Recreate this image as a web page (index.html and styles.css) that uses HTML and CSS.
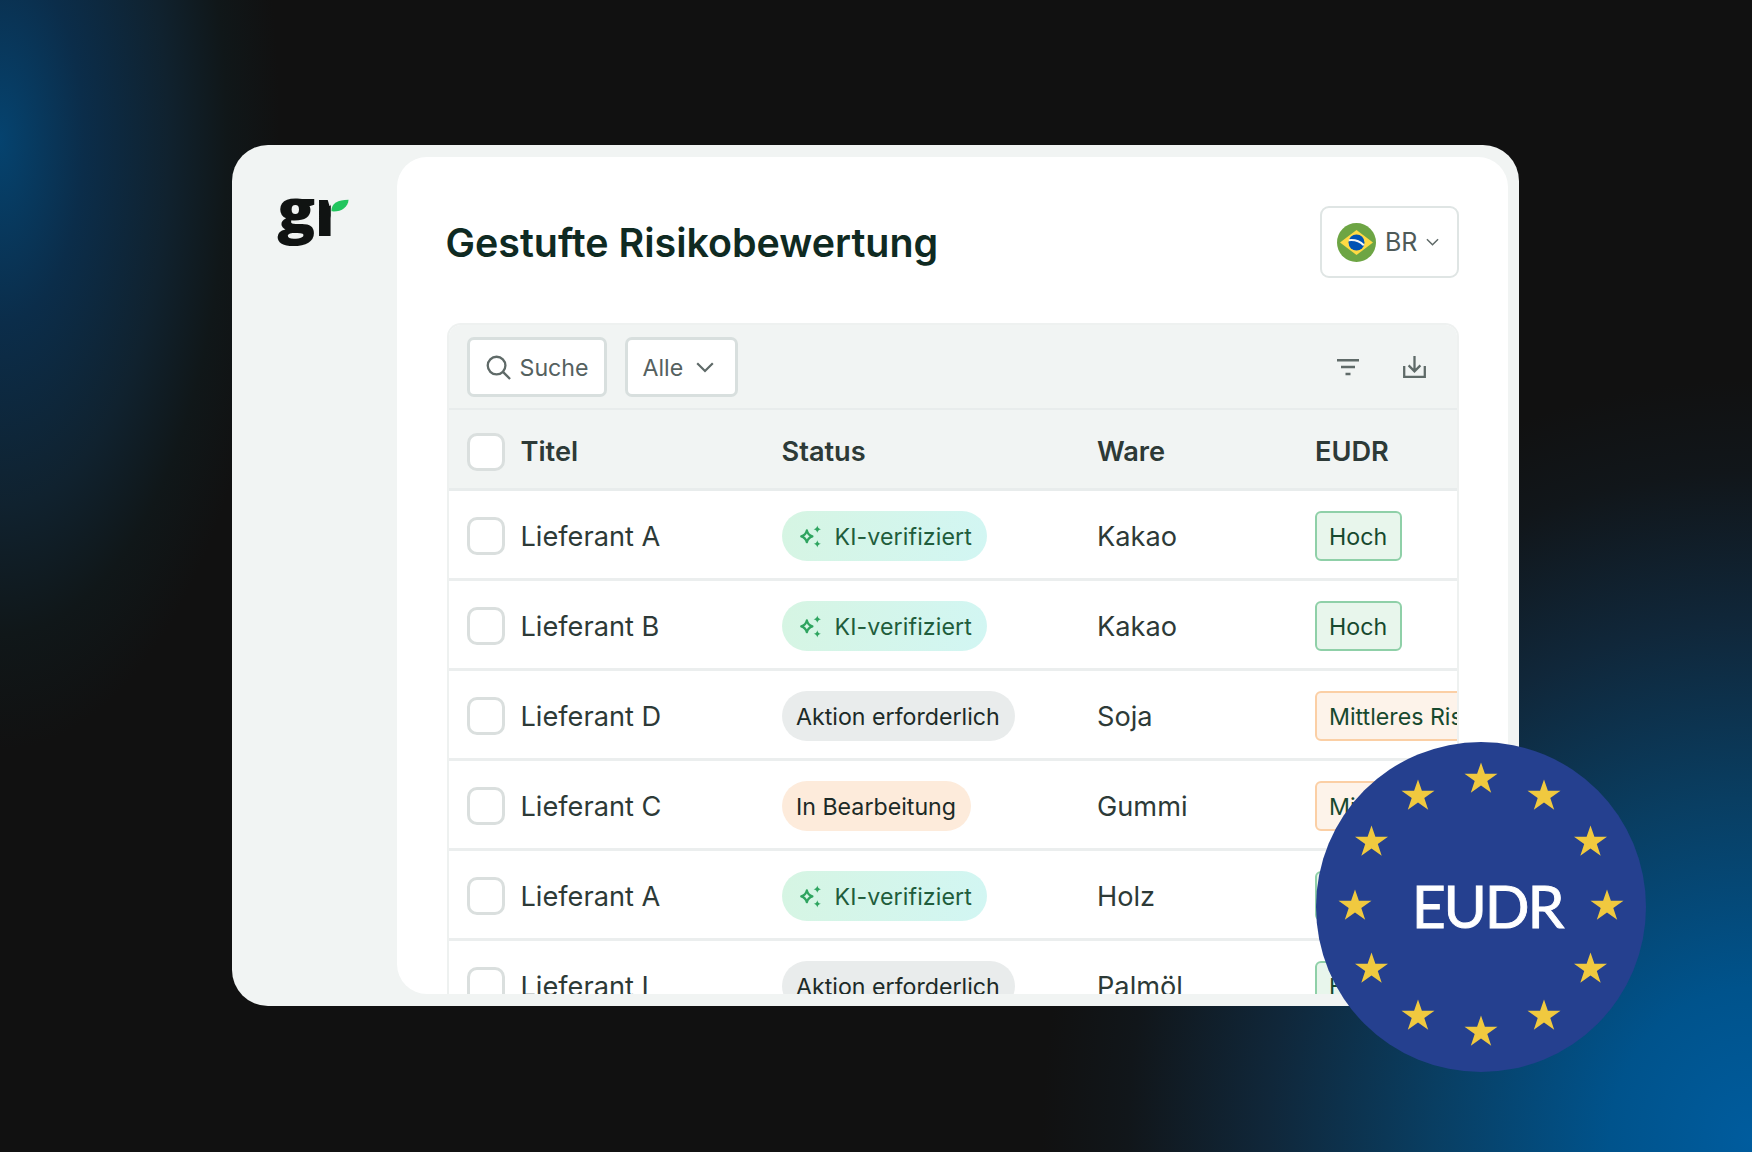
FILE: index.html
```html
<!DOCTYPE html>
<html lang="de">
<head>
<meta charset="utf-8">
<title>Gestufte Risikobewertung</title>
<link rel="stylesheet" href="styles.css">
</head>
<body>
<svg class="defs" width="0" height="0" aria-hidden="true">
  <defs>
    <symbol id="spark" viewBox="0 0 22 22">
      <path d="M7.5 5.2 C8.3 8.6 9.4 9.7 12.8 10.8 C9.4 11.9 8.3 13 7.5 16.4 C6.7 13 5.6 11.9 2.2 10.8 C5.6 9.7 6.7 8.6 7.5 5.2Z" fill="none" stroke="currentColor" stroke-width="2.2" stroke-linejoin="round"/>
      <path d="M17.5 0.5 C18 2.6 18.9 3.5 21 4 C18.9 4.5 18 5.4 17.5 7.5 C17 5.4 16.1 4.5 14 4 C16.1 3.5 17 2.6 17.5 0.5Z" fill="currentColor"/>
      <path d="M17.5 14.5 C18 16.6 18.9 17.5 21 18 C18.9 18.5 18 19.4 17.5 21.5 C17 19.4 16.1 18.5 14 18 C16.1 17.5 17 16.6 17.5 14.5Z" fill="currentColor"/>
    </symbol>
    <symbol id="star" viewBox="-17 -17 34 34">
      <path d="M0 -16.5 L3.9 -5.2 L16.5 -5.2 L6.3 2 L10.2 13.8 L0 6.5 L-10.2 13.8 L-6.3 2 L-16.5 -5.2 L-3.9 -5.2Z" fill="currentColor"/>
    </symbol>
  </defs>
</svg>

<main class="stage">
  <section class="window">
    <aside class="sidebar">
      <div class="logo">
        <span class="logo-g">g</span><span class="logo-r">r</span>
        <svg class="logo-leaf" viewBox="0 0 20 14" aria-hidden="true"><path d="M0.5 13.5 C0 5 7 0.5 19.5 0.5 C19 9 11 14.5 0.5 13.5Z" fill="#22c55e"/></svg>
      </div>
    </aside>

    <div class="panel">
      <header class="panel-head">
        <h1 class="title">Gestufte Risikobewertung</h1>
        <button class="country">
          <svg class="flag" viewBox="0 0 39 39" aria-hidden="true">
            <circle cx="19.5" cy="19.5" r="19.5" fill="#6da544"/>
            <path d="M19.5 7 L36 19.5 L19.5 32 L3 19.5Z" fill="#ffda44"/>
            <circle cx="19.5" cy="19.5" r="8" fill="#0052b4"/>
            <path d="M11.8 17.2 C17 16.6 23 18.4 26.8 22.2" fill="none" stroke="#f5f5f5" stroke-width="2"/>
          </svg>
          <span>BR</span>
          <svg class="chev-small" viewBox="0 0 14 8" aria-hidden="true"><path d="M1 1 L7 7 L13 1" fill="none" stroke="currentColor" stroke-width="1.6"/></svg>
        </button>
      </header>

      <div class="table">
        <div class="toolbar">
          <div class="control">
            <svg class="search-icon" viewBox="0 0 26 26" aria-hidden="true"><circle cx="11" cy="11" r="9.2" fill="none" stroke="currentColor" stroke-width="2.4"/><path d="M17.6 17.6 L25 25" fill="none" stroke="currentColor" stroke-width="2.4"/></svg>
            <span>Suche</span>
          </div>
          <div class="control control-select">
            <span>Alle</span>
            <svg class="chev" viewBox="0 0 18 11" aria-hidden="true"><path d="M1.2 1.2 L9 9 L16.8 1.2" fill="none" stroke="currentColor" stroke-width="2.2"/></svg>
          </div>
          <div class="tools">
            <svg class="tool-filter" viewBox="0 0 22 17" aria-hidden="true"><path d="M0 1.3 H22 M4 8 H18 M8.5 15 H13.5" fill="none" stroke="currentColor" stroke-width="2.4"/></svg>
            <svg class="tool-down" viewBox="0 0 23 22" aria-hidden="true"><path d="M1.2 10 V20.8 H21.8 V10 M11.5 0 V15 M5.6 9.4 L11.5 15.3 L17.4 9.4" fill="none" stroke="currentColor" stroke-width="2.3"/></svg>
          </div>
        </div>

        <div class="row row-head">
          <div class="cell-title"><span class="check"></span>Titel</div>
          <div>Status</div>
          <div>Ware</div>
          <div>EUDR</div>
        </div>

        <div class="row">
          <div class="cell-title"><span class="check"></span>Lieferant A</div>
          <div><span class="pill pill-ai"><svg class="spark"><use href="#spark"/></svg>KI-verifiziert</span></div>
          <div>Kakao</div>
          <div><span class="tag tag-high">Hoch</span></div>
        </div>
        <div class="row">
          <div class="cell-title"><span class="check"></span>Lieferant B</div>
          <div><span class="pill pill-ai"><svg class="spark"><use href="#spark"/></svg>KI-verifiziert</span></div>
          <div>Kakao</div>
          <div><span class="tag tag-high">Hoch</span></div>
        </div>
        <div class="row">
          <div class="cell-title"><span class="check"></span>Lieferant D</div>
          <div><span class="pill pill-action">Aktion erforderlich</span></div>
          <div>Soja</div>
          <div><span class="tag tag-mid">Mittleres Risiko</span></div>
        </div>
        <div class="row">
          <div class="cell-title"><span class="check"></span>Lieferant C</div>
          <div><span class="pill pill-progress">In Bearbeitung</span></div>
          <div>Gummi</div>
          <div><span class="tag tag-mid">Mittleres Risiko</span></div>
        </div>
        <div class="row">
          <div class="cell-title"><span class="check"></span>Lieferant A</div>
          <div><span class="pill pill-ai"><svg class="spark"><use href="#spark"/></svg>KI-verifiziert</span></div>
          <div>Holz</div>
          <div><span class="tag tag-high">Hoch</span></div>
        </div>
        <div class="row">
          <div class="cell-title"><span class="check"></span>Lieferant I</div>
          <div><span class="pill pill-action">Aktion erforderlich</span></div>
          <div>Palmöl</div>
          <div><span class="tag tag-high">Hoch</span></div>
        </div>
      </div>
    </div>
  </section>

  <div class="eu-badge">
    <svg class="eu-stars" viewBox="0 0 330 330" aria-hidden="true">
      <use href="#star" x="148" y="20" width="34" height="34"/>
      <use href="#star" x="211" y="37" width="34" height="34"/>
      <use href="#star" x="257.5" y="83" width="34" height="34"/>
      <use href="#star" x="274" y="147" width="34" height="34"/>
      <use href="#star" x="257.5" y="210" width="34" height="34"/>
      <use href="#star" x="211" y="257" width="34" height="34"/>
      <use href="#star" x="148" y="273" width="34" height="34"/>
      <use href="#star" x="85" y="257" width="34" height="34"/>
      <use href="#star" x="38.5" y="210" width="34" height="34"/>
      <use href="#star" x="22" y="147" width="34" height="34"/>
      <use href="#star" x="38.5" y="83" width="34" height="34"/>
      <use href="#star" x="85" y="37" width="34" height="34"/>
    </svg>
    <span class="eu-text">EUDR</span>
  </div>
</main>
</body>
</html>
```
FILE: styles.css
```css
* { box-sizing: border-box; }

html, body {
  margin: 0;
  height: 100%;
}

body {
  width: 1752px;
  height: 1152px;
  overflow: hidden;
  font-family: Inter, "Liberation Sans", sans-serif;
  background:
    radial-gradient(ellipse 280px 610px at 0 140px, #05436f 0%, #0b2d4a 30%, #10222f 60%, #101719 81%, rgba(17, 17, 17, 0) 100%),
    radial-gradient(ellipse 710px 760px at 1752px 1140px, #005c9e 0%, #00538c 20%, #093e62 45%, #10273a 68%, #11161a 88%, #111111 100%);
}

.defs { position: absolute; }

.stage {
  position: relative;
  width: 1752px;
  height: 1152px;
  padding: 145px 0 0 232px;
}

.window {
  display: flex;
  width: 1287px;
  height: 861px;
  padding: 12px 11px 12px 0;
  background: #f1f4f3;
  border-radius: 36px;
}

.sidebar {
  flex: 0 0 165px;
  padding: 26px 0 0 45px;
}

.logo {
  position: relative;
  width: 75px;
  height: 60px;
  font-family: "Open Sans", sans-serif;
  font-weight: 800;
  font-size: 72px;
  line-height: 60px;
  color: #101312;
}

.logo-g {
  position: absolute;
  left: 0;
  top: 0;
  transform: scale(0.88, 0.84);
  transform-origin: 0 0;
}

.logo-r {
  position: absolute;
  left: 38px;
  top: 0;
  clip-path: inset(0 calc(100% - 18.6px) 0 0);
  transform: scale(0.85, 0.92);
  transform-origin: 0 0;
}

.logo-leaf {
  position: absolute;
  left: 54px;
  top: 16px;
  width: 18px;
  height: 13px;
}

.panel {
  flex: 1;
  min-width: 0;
  padding: 49px 49px 0 49.5px;
  background: #ffffff;
  border-radius: 30px;
  overflow: hidden;
}

.panel-head {
  display: flex;
  align-items: center;
  justify-content: space-between;
  height: 72px;
  margin-bottom: 45px;
}

.title {
  margin: 1px 0 0 -1px;
  font-size: 39.4px;
  font-weight: 600;
  color: #0f2a22;
}

.country {
  display: flex;
  align-items: center;
  gap: 9px;
  width: 139px;
  height: 72px;
  padding: 0 0 0 15px;
  background: #ffffff;
  border: 2px solid #dfe5e4;
  border-radius: 9px;
  font: 400 25px Inter, "Liberation Sans", sans-serif;
  color: #4e5a58;
}

.flag { width: 39px; height: 39px; flex: none; }
.chev-small { width: 13px; height: 8px; flex: none; color: #5f6a68; }

.table {
  border: 2px solid #eef1f0;
  border-bottom: 0;
  border-radius: 14px 14px 0 0;
  overflow: hidden;
}

.toolbar {
  display: flex;
  align-items: flex-start;
  gap: 18px;
  height: 85px;
  padding: 12px 31px 0 18px;
  background: #f1f4f3;
  border-bottom: 2px solid #e8ecec;
}

.control {
  display: flex;
  align-items: center;
  gap: 9px;
  height: 60px;
  width: 140px;
  padding-left: 16px;
  background: #ffffff;
  border: 3px solid #d8dfde;
  border-radius: 7px;
  font-size: 23.2px;
  color: #55615f;
}

.control span { padding-top: 2px; }

.control-select {
  width: 113px;
  gap: 13px;
  padding-left: 15px;
}

.search-icon { width: 25px; height: 25px; flex: none; color: #5f6a68; }
.chev { width: 18px; height: 11px; flex: none; color: #5f6a68; }

.tools {
  display: flex;
  align-items: flex-start;
  gap: 44px;
  margin-left: auto;
  padding-top: 19px;
  color: #5f6a68;
}

.tool-filter { width: 22px; height: 17px; margin-top: 3px; }
.tool-down { width: 23px; height: 22px; }

.row {
  display: grid;
  grid-template-columns: 315px 315.5px 218px minmax(0, 1fr);
  align-items: center;
  height: 90px;
  padding: 3px 0 0 18px;
  border-bottom: 3px solid #ebeeee;
  font-size: 27.2px;
  color: #2d3a37;
  background: #ffffff;
  overflow: hidden;
}

.row-head {
  height: 81px;
  padding-top: 5px;
  font-weight: 600;
  background: #f1f4f3;
  border-bottom-color: #e8ecec;
}

.cell-title {
  display: flex;
  align-items: center;
  gap: 16px;
}

.check {
  flex: none;
  width: 38px;
  height: 38px;
  background: #ffffff;
  border: 3px solid #dadfde;
  border-radius: 10px;
}

.pill {
  display: inline-flex;
  align-items: center;
  height: 50px;
  padding: 1px 15px 0 14.5px;
  border-radius: 25px;
  font-size: 23.2px;
  vertical-align: middle;
  white-space: nowrap;
}

.pill-ai {
  gap: 13px;
  padding: 1px 15px 0 17px;
  letter-spacing: 0.1px;
  color: #1f5d3c;
  background: linear-gradient(100deg, #d6f5e3, #d2f6f3);
}

.pill-action { color: #1c2a27; background: #e9ecec; }
.pill-progress { color: #1c2a27; background: #fdebdb; }

.spark { width: 23px; height: 23px; flex: none; color: #2ea45f; }

.tag {
  display: inline-flex;
  align-items: center;
  height: 50px;
  padding: 1px 13px 0 12px;
  border: 2px solid;
  border-radius: 6px;
  font-size: 23.2px;
  vertical-align: middle;
  white-space: nowrap;
}

.tag-high { color: #17492e; background: #e8f6ec; border-color: #8fd0a8; }
.tag-mid { color: #17492e; background: #fdf3ea; border-color: #fbcfa5; }

.eu-badge {
  position: absolute;
  left: 1315.5px;
  top: 741.5px;
  display: flex;
  align-items: center;
  justify-content: center;
  width: 330px;
  height: 330px;
  padding: 0 0 2px 13px;
  border-radius: 50%;
  background: #25408f;
}

.eu-stars {
  position: absolute;
  inset: 0;
  width: 330px;
  height: 330px;
  color: #f0c93f;
}

.eu-text {
  position: relative;
  font-family: Lato, "Open Sans", sans-serif;
  font-size: 59px;
  font-weight: 400;
  letter-spacing: -2.2px;
  -webkit-text-stroke: 0.9px #ffffff;
  color: #ffffff;
}
```
